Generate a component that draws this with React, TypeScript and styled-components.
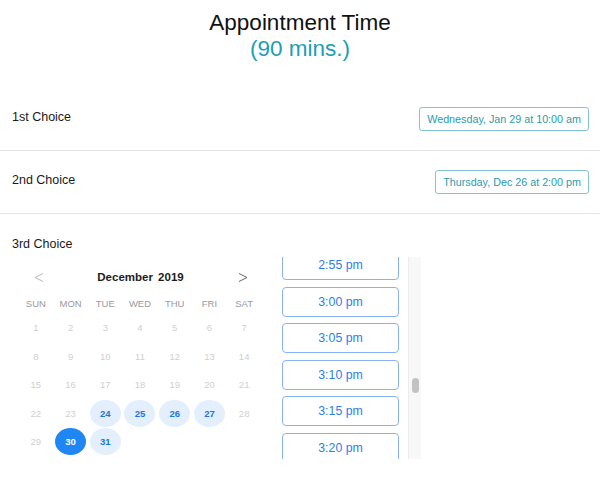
import React, { useLayoutEffect, useRef } from "react";
import styled, { createGlobalStyle } from "styled-components";

const GlobalStyle = createGlobalStyle`
  html, body { margin: 0; padding: 0; background: #ffffff; }
  body { font-family: "Liberation Sans", Arial, sans-serif; color: #111; }
  * { box-sizing: border-box; }
`;

const Page = styled.div`
  width: 600px;
`;

const Header = styled.header`
  padding: 10px 0 26px;
  text-align: center;
`;

const Title = styled.h1`
  margin: 0;
  font-size: 22.5px;
  line-height: 26px;
  font-weight: 400;
  color: #111;
`;

const Duration = styled.div`
  font-size: 22.5px;
  line-height: 26px;
  color: #1d9db6;
`;

const ChoiceRow = styled.div`
  height: 63px;
  display: flex;
  align-items: center;
  justify-content: space-between;
  padding: 0 11px 0 12px;
  border-bottom: 1px solid #e4e4e4;
`;

const Label = styled.div<{ $shift?: boolean }>`
  font-size: 12.5px;
  line-height: 15px;
  color: #1a1a1a;
  margin-bottom: ${(p) => (p.$shift ? "4px" : "0")};
`;

const ChoiceButton = styled.button`
  height: 24px;
  padding: 0 7px;
  border: 1px solid #80c5d1;
  border-radius: 3px;
  background: #fff;
  color: #2a9bb1;
  font-family: inherit;
  font-size: 10.75px;
  line-height: 22px;
`;

const PickerSection = styled.section`
  padding: 22.5px 11px 0 12px;
`;

const PickerBody = styled.div`
  display: flex;
  gap: 20.5px;
  margin-top: 5.5px;
  padding-left: 6.5px;
`;

const Calendar = styled.div`
  width: 243px;
`;

const CalHeader = styled.div`
  height: 40px;
  display: flex;
  align-items: center;
  justify-content: space-between;
  padding: 0 7px 0 8px;
`;

const NavButton = styled.button`
  width: 24px;
  height: 24px;
  padding: 0;
  border: 0;
  background: transparent;
  display: flex;
  align-items: center;
  justify-content: center;
`;

const MonthTitle = styled.div`
  font-size: 11.5px;
  font-weight: 700;
  color: #1c1c1c;
  word-spacing: 2px;
`;

const WeekRow = styled.div`
  display: grid;
  grid-template-columns: repeat(7, 1fr);
  height: 13px;
`;

const WeekDay = styled.div`
  text-align: center;
  font-size: 9.5px;
  line-height: 13px;
  color: #9a9a9a;
`;

const DateGrid = styled.div`
  display: grid;
  grid-template-columns: repeat(7, 1fr);
  row-gap: 1.5px;
  margin-top: 4px;
`;

const DateCell = styled.div`
  height: 27px;
  display: flex;
  align-items: center;
  justify-content: center;
`;

type DayState = "off" | "open" | "selected";

const DayDot = styled.div<{ $state: DayState }>`
  width: 31px;
  height: 27px;
  border-radius: 50%;
  display: flex;
  align-items: center;
  justify-content: center;
  font-size: 9.5px;
  font-weight: ${(p) => (p.$state === "off" ? 400 : 700)};
  color: ${(p) =>
    p.$state === "off" ? "#cfcfcf" : p.$state === "selected" ? "#ffffff" : "#1c74e6"};
  background: ${(p) =>
    p.$state === "off" ? "transparent" : p.$state === "selected" ? "#1f87f4" : "#e3effd"};
`;

const TimePanel = styled.div`
  display: flex;
  height: 202px;
`;

const TimeList = styled.div`
  width: 126px;
  height: 100%;
  overflow: hidden;
`;

const ScrollTrack = styled.div`
  width: 13px;
  height: 100%;
  background: #f8f8f8;
  border-left: 1px solid #ececec;
  padding: 121px 2px 0 3px;
`;

const ScrollThumb = styled.div`
  width: 7px;
  height: 15px;
  border-radius: 4px;
  background: #c2c2c2;
`;

const TimeButton = styled.button`
  display: block;
  width: 117px;
  height: 30px;
  margin: 0 0 6.5px;
  padding: 0;
  border: 1px solid #8ab1f3;
  border-radius: 4px;
  background: #fff;
  color: #2b7ef0;
  font-family: inherit;
  font-size: 12.3px;
`;

const Chevron = ({ dir, color }: { dir: "left" | "right"; color: string }) => (
  <svg width="10" height="9" viewBox="0 0 10 9" fill="none">
    <polyline
      points={dir === "left" ? "9,0.5 1,4.5 9,8.5" : "1,0.5 9,4.5 1,8.5"}
      stroke={color}
      strokeWidth="1"
      strokeLinejoin="miter"
    />
  </svg>
);

const weekdays = ["SUN", "MON", "TUE", "WED", "THU", "FRI", "SAT"];
const openDays = new Set([24, 25, 26, 27, 31]);
const selectedDay = 30;

const visibleTimes = ["2:55 pm", "3:00 pm", "3:05 pm", "3:10 pm", "3:15 pm", "3:20 pm"];

export default function App() {
  const listRef = useRef<HTMLDivElement>(null);

  useLayoutEffect(() => {
    if (listRef.current) {
      listRef.current.scrollTop = 6.6;
    }
  }, []);

  const days = Array.from({ length: 31 }, (_, i) => i + 1);

  return (
    <Page>
      <GlobalStyle />
      <Header>
        <Title>Appointment Time</Title>
        <Duration>(90 mins.)</Duration>
      </Header>

      <ChoiceRow>
        <Label $shift>1st Choice</Label>
        <ChoiceButton>Wednesday, Jan 29 at 10:00 am</ChoiceButton>
      </ChoiceRow>
      <ChoiceRow>
        <Label $shift>2nd Choice</Label>
        <ChoiceButton>Thursday, Dec 26 at 2:00 pm</ChoiceButton>
      </ChoiceRow>

      <PickerSection>
        <Label>3rd Choice</Label>
        <PickerBody>
          <Calendar>
            <CalHeader>
              <NavButton aria-label="Previous month">
                <Chevron dir="left" color="#b8b8b8" />
              </NavButton>
              <MonthTitle>December 2019</MonthTitle>
              <NavButton aria-label="Next month">
                <Chevron dir="right" color="#666666" />
              </NavButton>
            </CalHeader>
            <WeekRow>
              {weekdays.map((d) => (
                <WeekDay key={d}>{d}</WeekDay>
              ))}
            </WeekRow>
            <DateGrid>
              {days.map((d) => {
                const state: DayState =
                  d === selectedDay ? "selected" : openDays.has(d) ? "open" : "off";
                return (
                  <DateCell key={d}>
                    <DayDot $state={state}>{d}</DayDot>
                  </DateCell>
                );
              })}
            </DateGrid>
          </Calendar>
          <TimePanel>
            <TimeList ref={listRef}>
              {visibleTimes.map((t) => (
                <TimeButton key={t}>{t}</TimeButton>
              ))}
            </TimeList>
            <ScrollTrack>
              <ScrollThumb />
            </ScrollTrack>
          </TimePanel>
        </PickerBody>
      </PickerSection>
    </Page>
  );
}
